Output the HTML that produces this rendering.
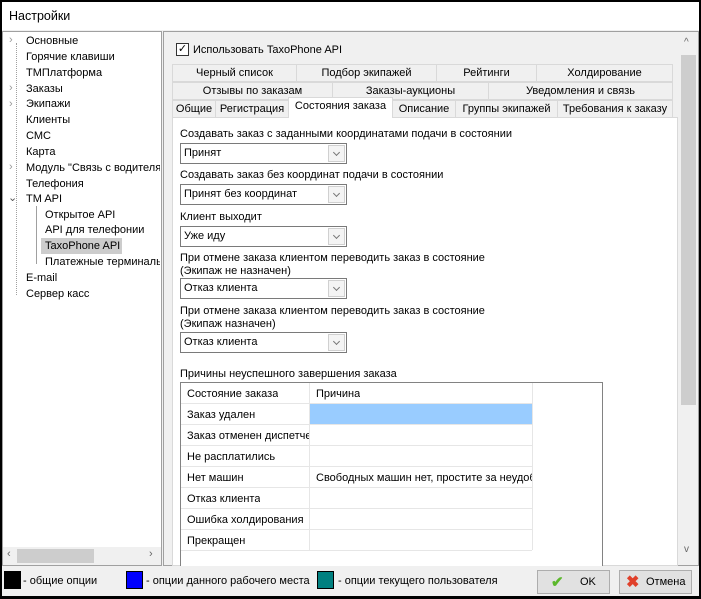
<!DOCTYPE html><html><head><meta charset="utf-8"><style>
*{box-sizing:border-box;margin:0;padding:0}
body{width:701px;height:599px;overflow:hidden;background:#000;font-family:"Liberation Sans",sans-serif;font-size:11px;color:#000;position:relative}
.a{position:absolute;white-space:nowrap}
#win{position:absolute;left:2px;top:2px;width:697px;height:594px;background:#f0f0f0}
.tab{position:absolute;height:18px;border:1px solid #d9d9d9;background:#f0f0f0;text-align:center;line-height:16px;white-space:nowrap}
.cb{position:absolute;left:180px;width:167px;height:21px;border:1px solid #7a7a7a;background:#fff;padding-left:3px;line-height:19px;white-space:nowrap}
.cb i{position:absolute;right:1px;top:1px;width:17px;height:17px;border:1px solid #d0d0d0;background:#f4f4f4}
.cb i:after{content:"";position:absolute;left:5px;top:4px;width:4px;height:4px;border-right:1px solid #777;border-bottom:1px solid #777;transform:rotate(45deg)}
.ti{position:absolute;white-space:nowrap}
.row{position:absolute;left:181px;width:351px;height:21px;border-bottom:1px solid #e6e6e6;white-space:nowrap}
.row span{position:absolute;left:6px;top:5px;white-space:nowrap;overflow:hidden}
.row b{font-weight:normal;position:absolute;left:135px;top:5px;white-space:nowrap;overflow:hidden}
</style></head><body>
<div id="win"></div>
<div class="a" style="left:2px;top:2px;width:697px;height:28px;background:#fff"></div>
<div class="a" style="left:9px;top:9px;font-size:12.5px">Настройки</div>
<div class="a" style="left:2px;top:31px;width:160px;height:535px;background:#fff;border:1px solid #a0a0a0"></div>
<div class="a" style="left:16px;top:43px;height:252px;border-left:1px dotted #a0a0a0"></div>
<div class="a" style="left:36px;top:206px;height:58px;border-left:1px solid #a0a0a0"></div>
<div class="ti" style="left:9px;top:34px;color:#999">›</div>
<div class="ti" style="left:26px;top:35px">Основные</div>
<div class="ti" style="left:26px;top:51px">Горячие клавиши</div>
<div class="ti" style="left:26px;top:67px">ТМПлатформа</div>
<div class="ti" style="left:9px;top:82px;color:#999">›</div>
<div class="ti" style="left:26px;top:83px">Заказы</div>
<div class="ti" style="left:9px;top:98px;color:#999">›</div>
<div class="ti" style="left:26px;top:98px">Экипажи</div>
<div class="ti" style="left:26px;top:114px">Клиенты</div>
<div class="ti" style="left:26px;top:130px">СМС</div>
<div class="ti" style="left:26px;top:146px">Карта</div>
<div class="ti" style="left:9px;top:161px;color:#999">›</div>
<div class="ti" style="left:26px;top:162px;width:134px;overflow:hidden">Модуль "Связь с водителя</div>
<div class="ti" style="left:26px;top:178px">Телефония</div>
<div class="ti" style="left:8px;top:191px;color:#555">⌄</div>
<div class="ti" style="left:26px;top:193px">TM API</div>
<div class="ti" style="left:45px;top:209px">Открытое API</div>
<div class="ti" style="left:45px;top:224px">API для телефонии</div>
<div class="a" style="left:41px;top:238px;width:81px;height:16px;background:#cccccc"></div>
<div class="ti" style="left:45px;top:240px">TaxoPhone API</div>
<div class="ti" style="left:45px;top:256px;width:115px;overflow:hidden">Платежные терминалы</div>
<div class="ti" style="left:26px;top:272px">E-mail</div>
<div class="ti" style="left:26px;top:288px">Сервер касс</div>
<div class="a" style="left:3px;top:547px;width:158px;height:18px;background:#f0f0f0"></div>
<div class="a" style="left:17px;top:549px;width:77px;height:14px;background:#cdcdcd"></div>
<div class="ti" style="left:7px;top:548px;color:#666">‹</div>
<div class="ti" style="left:149px;top:548px;color:#666">›</div>
<div class="a" style="left:163px;top:31px;width:536px;height:535px;background:#f0f0f0;border:1px solid #a0a0a0"></div>
<div class="a" style="left:680px;top:35px;width:17px;height:530px;background:#f0f0f0"></div>
<div class="a" style="left:681px;top:55px;width:15px;height:350px;background:#cdcdcd"></div>
<div class="ti" style="left:684px;top:37px;color:#666;font-size:10px">^</div>
<div class="ti" style="left:684px;top:544px;color:#666;font-size:10px">v</div>
<div class="a" style="left:176px;top:43px;width:13px;height:13px;border:1px solid #333;background:#fff;font-size:11px;line-height:11px;text-align:center">✓</div>
<div class="ti" style="left:193px;top:44px">Использовать TaxoPhone API</div>
<div class="a" style="left:172px;top:117px;width:506px;height:449px;background:#fff;border:1px solid #d9d9d9"></div>
<div class="tab" style="left:172px;top:64px;width:125px">Черный список</div>
<div class="tab" style="left:296px;top:64px;width:141px">Подбор экипажей</div>
<div class="tab" style="left:436px;top:64px;width:101px">Рейтинги</div>
<div class="tab" style="left:536px;top:64px;width:137px">Холдирование</div>
<div class="tab" style="left:172px;top:82px;width:161px">Отзывы по заказам</div>
<div class="tab" style="left:332px;top:82px;width:157px">Заказы-аукционы</div>
<div class="tab" style="left:488px;top:82px;width:185px">Уведомления и связь</div>
<div class="tab" style="left:172px;top:100px;width:44px">Общие</div>
<div class="tab" style="left:215px;top:100px;width:74px">Регистрация</div>
<div class="tab" style="left:288px;top:97px;width:105px;height:21px;background:#fff;border-bottom:none">Состояния заказа</div>
<div class="tab" style="left:392px;top:100px;width:64px">Описание</div>
<div class="tab" style="left:455px;top:100px;width:103px">Группы экипажей</div>
<div class="tab" style="left:557px;top:100px;width:116px">Требования к заказу</div>
<div class="ti" style="left:180px;top:128px">Создавать заказ с заданными координатами подачи в состоянии</div>
<div class="cb" style="top:143px">Принят<i></i></div>
<div class="ti" style="left:180px;top:169px">Создавать заказ без координат подачи в состоянии</div>
<div class="cb" style="top:184px">Принят без координат<i></i></div>
<div class="ti" style="left:180px;top:211px">Клиент выходит</div>
<div class="cb" style="top:226px">Уже иду<i></i></div>
<div class="ti" style="left:180px;top:252px;line-height:13px">При отмене заказа клиентом переводить заказ в состояние<br>(Экипаж не назначен)</div>
<div class="cb" style="top:278px">Отказ клиента<i></i></div>
<div class="ti" style="left:180px;top:305px;line-height:13px">При отмене заказа клиентом переводить заказ в состояние<br>(Экипаж назначен)</div>
<div class="cb" style="top:332px">Отказ клиента<i></i></div>
<div class="ti" style="left:180px;top:368px">Причины неуспешного завершения заказа</div>
<div class="a" style="left:180px;top:382px;width:423px;height:184px;border:1px solid #828282;border-bottom:none;background:#fff"></div>
<div class="a" style="left:309px;top:383px;height:167px;border-left:1px solid #e6e6e6"></div>
<div class="a" style="left:532px;top:383px;height:167px;border-left:1px solid #e6e6e6"></div>
<div class="row" style="top:383px"><span>Состояние заказа</span><b>Причина</b></div>
<div class="a" style="left:310px;top:404px;width:222px;height:20px;background:#99ccff"></div>
<div class="row" style="top:404px"><span>Заказ удален</span></div>
<div class="row" style="top:425px"><span style="width:122px">Заказ отменен диспетчером</span></div>
<div class="row" style="top:446px"><span>Не расплатились</span></div>
<div class="row" style="top:467px"><span>Нет машин</span><b style="width:216px">Свободных машин нет, простите за неудобства</b></div>
<div class="row" style="top:488px"><span>Отказ клиента</span></div>
<div class="row" style="top:509px"><span>Ошибка холдирования</span></div>
<div class="row" style="top:530px"><span>Прекращен</span></div>
<div class="a" style="left:4px;top:571px;width:17px;height:18px;background:#000"></div>
<div class="ti" style="left:23px;top:575px">- общие опции</div>
<div class="a" style="left:126px;top:571px;width:17px;height:18px;background:#0000ff;border:1px solid #000"></div>
<div class="ti" style="left:146px;top:575px">- опции данного рабочего места</div>
<div class="a" style="left:317px;top:571px;width:17px;height:18px;background:#008080;border:1px solid #000"></div>
<div class="ti" style="left:338px;top:575px">- опции текущего пользователя</div>
<div class="a" style="left:537px;top:570px;width:73px;height:24px;border:1px solid #adadad;background:#e1e1e1"></div>
<div class="ti" style="left:551px;top:573px;color:#5cb82c;font-size:15px;font-weight:bold">✔</div>
<div class="ti" style="left:580px;top:576px">OK</div>
<div class="a" style="left:619px;top:570px;width:73px;height:24px;border:1px solid #adadad;background:#e1e1e1"></div>
<div class="ti" style="left:626px;top:572px;color:#e0402a;font-size:16px;font-weight:bold">✖</div>
<div class="ti" style="left:646px;top:576px">Отмена</div>
</body></html>
